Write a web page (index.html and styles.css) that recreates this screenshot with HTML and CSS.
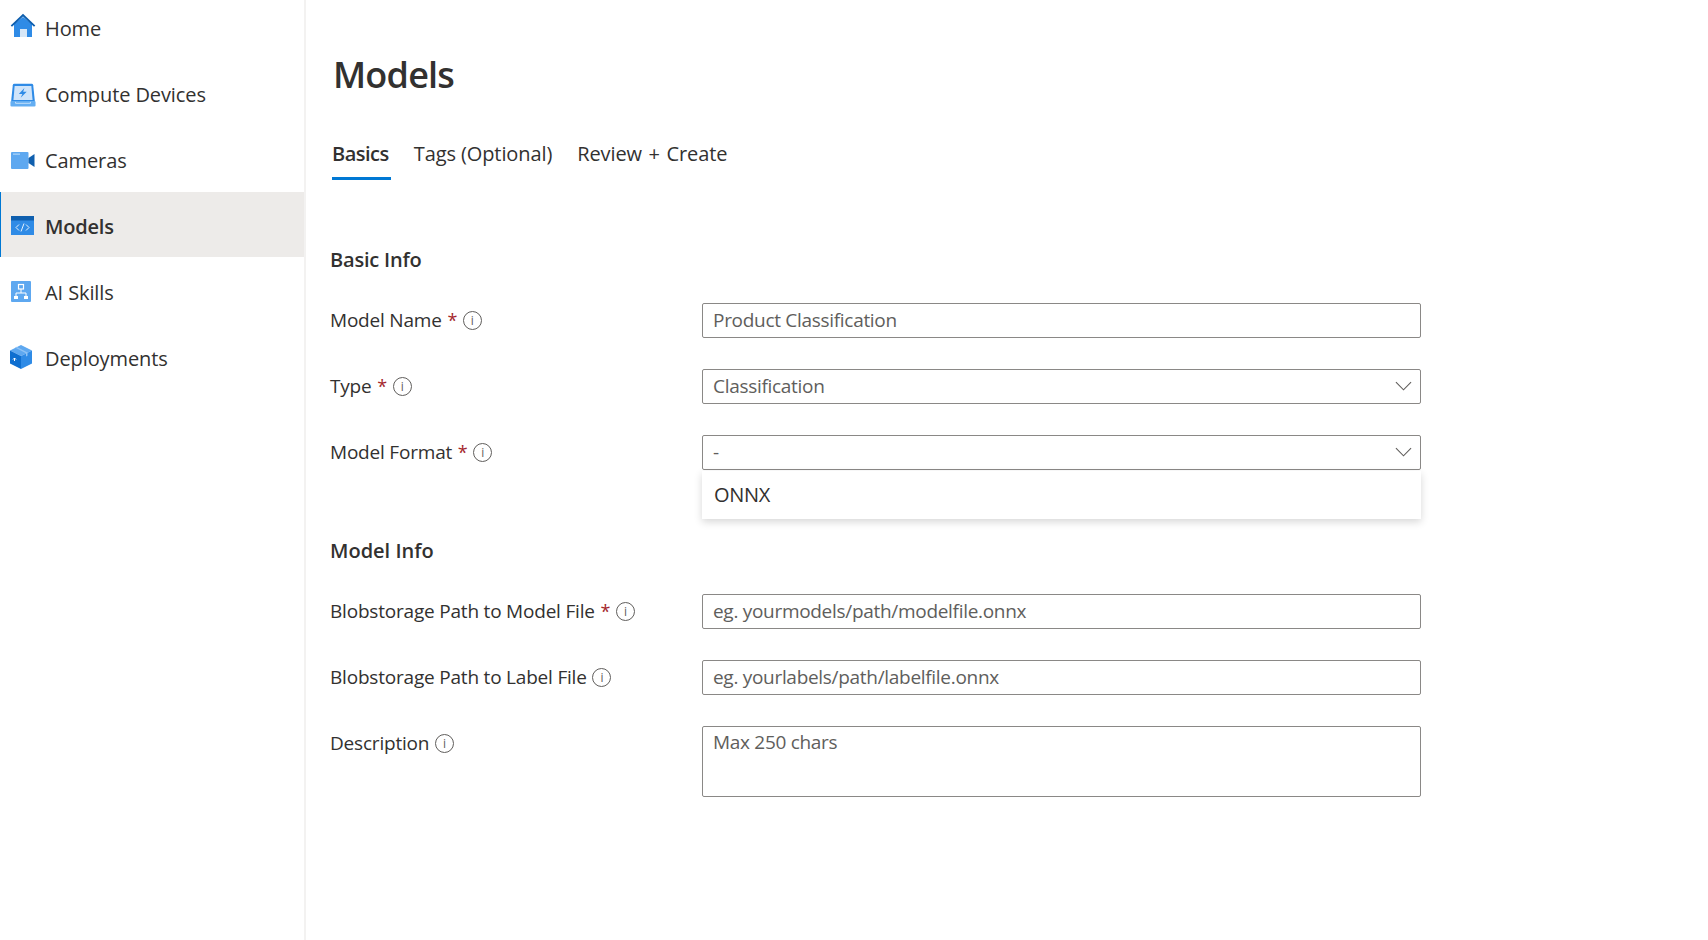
FILE: index.html
```html
<!DOCTYPE html>
<html lang="en">
<head>
    <meta charset="UTF-8">
    <title>Models</title>
    <link rel="stylesheet" href="styles.css">
</head>
<body>
    <div class="app">
        <nav class="sidebar">
            <a class="nav-item">
                <svg class="nav-icon" viewBox="0 2 26 26">
                    <path d="M4 11 13 4l9 7v13h-5v-8h-7v8H4z" fill="#2f8be6"/>
                    <path d="M10 16h7v8h-7z" fill="#d7e7f7"/>
                    <path d="M.7 12.500 13 .8l12.300 11.700-1.300 1.300L13 3.600 2 13.800z" fill="#0f5fae"/>
                </svg>
                <span>Home</span>
            </a>
            <a class="nav-item">
                <svg class="nav-icon" viewBox="0 -1 28 26">
                    <path d="M3 2.500q.2-1.500 1.700-1.500h18.600q1.500 0 1.700 1.500l2 19.500H1z" fill="#2f8be6"/>
                    <path d="M5 3.500h18l1.300 15H3.700z" fill="#cfe4fa"/>
                    <path d="M15.500 5.500 9.500 12h3.800L11.500 16l6.500-6.500h-3.800z" fill="#2f8be6"/>
                    <rect x="0.500" y="19.500" width="27" height="6" rx="1.200" fill="#64aef2"/>
                    <path d="M6 20.500V22h16v-1.500" fill="none" stroke="#e6f2fd" stroke-width=".8"/>
                </svg>
                <span>Compute Devices</span>
            </a>
            <a class="nav-item">
                <svg class="nav-icon" viewBox="0 0 26 26">
                    <rect x="1" y="5" width="17.500" height="17" rx="1" fill="#5ea8f0"/>
                    <rect x="3" y="6.500" width="7" height="1.300" fill="#a9d2f7"/>
                    <path d="M18.500 11l6-4v13l-6-4z" fill="#0f5fae"/>
                </svg>
                <span>Cameras</span>
            </a>
            <a class="nav-item active">
                <svg class="nav-icon" viewBox="0 0 26 26">
                    <rect x="1" y="3" width="23" height="19" fill="#2f8be6"/>
                    <rect x="1" y="3" width="23" height="4.500" fill="#0f5fae"/>
                    <path d="M9 11.500l-3 3 3 3M16 11.500l3 3-3 3M14 10.500l-3 8" fill="none" stroke="#e6f2fd" stroke-width="1"/>
                </svg>
                <span>Models</span>
            </a>
            <a class="nav-item">
                <svg class="nav-icon" viewBox="0 0 26 26">
                    <rect x="1" y="2" width="20" height="21" rx="1" fill="#5ea8f0"/>
                    <path d="M11 10v4M6 18v-4h10v4" fill="none" stroke="#fff" stroke-width="1"/>
                    <rect x="8.500" y="5.500" width="5" height="4.500" fill="none" stroke="#fff" stroke-width="1.200"/>
                    <rect x="4" y="17" width="4" height="3" fill="#fff"/>
                    <rect x="14" y="17" width="4" height="3" fill="#fff"/>
                </svg>
                <span>AI Skills</span>
            </a>
            <a class="nav-item">
                <svg class="nav-icon" viewBox="0 0 26 26">
                    <path d="M11 0 22 5.500 11 11 0 5.500z" fill="#5ea8f0"/>
                    <path d="M0 5.500 11 11v13L0 18.500z" fill="#0f6fd0"/>
                    <path d="M22 5.500 11 11v13l11-5.500z" fill="#2f8be6"/>
                    <path d="M5 2.500 16 8.200v3.300l1.500-.8V7.500L6.500 1.800z" fill="#8fc3f5"/>
                    <path d="M4.500 16v-3M3 14.500l1.500-1.500L6 14.500" fill="none" stroke="#fff" stroke-width="1"/>
                </svg>
                <span>Deployments</span>
            </a>
        </nav>

        <main class="content">
            <h1 class="page-title">Models</h1>

            <div class="tabs">
                <div class="tab selected">Basics</div>
                <div class="tab">Tags (Optional)</div>
                <div class="tab wide">Review + Create</div>
            </div>

            <h2 class="section-title">Basic Info</h2>
            <div class="form-grid">
                <div class="form-label">Model Name <span class="req">*</span> <span class="info">i</span></div>
                <div class="field value">Product Classification</div>

                <div class="form-label">Type <span class="req">*</span> <span class="info">i</span></div>
                <div class="field value select">
                    <span>Classification</span>
                    <svg class="chevron" viewBox="0 0 18 10"><path d="M1 1l8 8 8-8" fill="none" stroke="#605e5c" stroke-width="1.200"/></svg>
                </div>

                <div class="form-label">Model Format <span class="req">*</span> <span class="info">i</span></div>
                <div class="dropdown-wrap">
                    <div class="field value select">
                        <span>-</span>
                        <svg class="chevron" viewBox="0 0 18 10"><path d="M1 1l8 8 8-8" fill="none" stroke="#605e5c" stroke-width="1.200"/></svg>
                    </div>
                    <div class="dropdown-menu">ONNX</div>
                </div>
            </div>

            <h2 class="section-title second">Model Info</h2>
            <div class="form-grid">
                <div class="form-label">Blobstorage Path to Model File <span class="req">*</span> <span class="info">i</span></div>
                <div class="field">eg. yourmodels/path/modelfile.onnx</div>

                <div class="form-label">Blobstorage Path to Label File <span class="info">i</span></div>
                <div class="field">eg. yourlabels/path/labelfile.onnx</div>

                <div class="form-label">Description <span class="info">i</span></div>
                <div class="field textarea">Max 250 chars</div>
            </div>
        </main>
    </div>
</body>
</html>
```

FILE: styles.css
```css
body {
    margin: 0;
    font-family: "Open Sans", "Noto Sans", sans-serif;
    background-color: #fff;
    color: #323130;
}
.app {
    display: flex;
    height: 940px;
    overflow: hidden;
}
.sidebar {
    width: 304px;
    flex-shrink: 0;
    border-right: 2px solid #f3f2f1;
    box-sizing: content-box;
    margin-top: -6px;
}
.nav-item {
    display: flex;
    align-items: center;
    height: 65px;
    margin-bottom: 1px;
    padding: 2px 0 0 10px;
    box-sizing: border-box;
    font-size: 20px;
    letter-spacing: -0.1px;
}
.nav-item span {
    padding-top: 1px;
}
.nav-item.active {
    background-color: #edebe9;
    box-shadow: inset 1px 0 0 #0078d4;
    font-weight: 600;
    letter-spacing: -0.2px;
}
.nav-icon {
    width: 26px;
    height: 26px;
    margin-right: 9px;
    flex-shrink: 0;
    overflow: visible;
}
.content {
    flex: 1;
    padding-left: 24px;
}
.page-title {
    margin: 50px 0 0 3px;
    font-size: 36px;
    line-height: 50px;
    font-weight: 600;
    letter-spacing: -0.8px;
}
.tabs {
    display: flex;
    margin: 37px 0 0 2px;
}
.tab {
    font-size: 20px;
    line-height: 28px;
    letter-spacing: -0.1px;
    padding: 3px 2px 9px 0;
    margin-right: 23px;
}
.tab.selected {
    font-weight: 600;
    letter-spacing: -0.5px;
    border-bottom: 3px solid #0078d4;
}
.tab.wide {
    word-spacing: 1.5px;
}
.section-title {
    margin: 66px 0 0;
    font-size: 20px;
    line-height: 28px;
    font-weight: 600;
    letter-spacing: -0.2px;
}
.section-title.second {
    margin-top: 0;
    padding-top: 67px;
    letter-spacing: 0;
}
.form-grid {
    display: grid;
    grid-template-columns: 372px 719px;
    row-gap: 31px;
    margin-top: 29px;
}
.form-label {
    font-size: 19px;
    line-height: 35px;
    letter-spacing: -0.2px;
}
.req {
    color: #a4262c;
    font-size: 18px;
    margin-left: 1px;
}
.info {
    display: inline-flex;
    align-items: center;
    justify-content: center;
    width: 19px;
    height: 19px;
    margin-left: 1px;
    border: 1px solid #605e5c;
    border-radius: 50%;
    box-sizing: border-box;
    font-size: 12px;
    letter-spacing: 0;
    color: #605e5c;
    vertical-align: 2px;
}
.field {
    display: flex;
    align-items: center;
    justify-content: space-between;
    height: 35px;
    padding: 0 11px 2px 10px;
    border: 1px solid #8a8886;
    border-radius: 2px;
    box-sizing: border-box;
    font-size: 19px;
    letter-spacing: -0.3px;
    color: #605e5c;
}
.field.textarea {
    height: 71px;
    align-items: flex-start;
    padding-top: 2px;
}
.chevron {
    width: 17px;
    height: 10px;
    margin-right: -3px;
}
.dropdown-wrap {
    position: relative;
}
.dropdown-menu {
    position: absolute;
    top: 36px;
    left: 0;
    right: 0;
    height: 48px;
    padding-left: 12px;
    line-height: 48px;
    font-size: 20px;
    letter-spacing: -0.3px;
    background-color: #fff;
    box-shadow: 0 3px 8px rgba(0, 0, 0, 0.16);
}
```
